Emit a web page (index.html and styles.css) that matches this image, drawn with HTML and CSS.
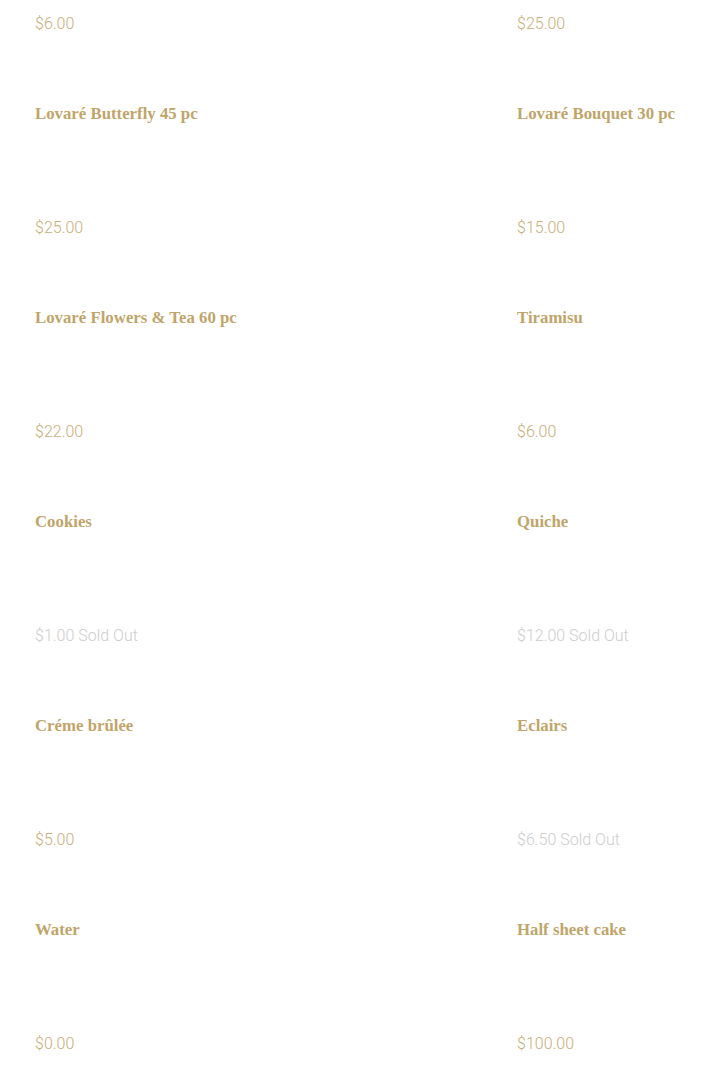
FILE: index.html
```html
<!DOCTYPE html>
<html>
<head>
<meta charset="utf-8">
<link rel="stylesheet" href="styles.css">
</head>
<body>
<div class="menu">
  <div class="item partial"><div class="price">$6.00</div></div>
  <div class="item partial"><div class="price">$25.00</div></div>

  <div class="item"><div class="title">Lovaré Butterfly 45 pc</div><div class="price">$25.00</div></div>
  <div class="item"><div class="title">Lovaré Bouquet 30 pc</div><div class="price">$15.00</div></div>

  <div class="item"><div class="title">Lovaré Flowers &amp; Tea 60 pc</div><div class="price">$22.00</div></div>
  <div class="item"><div class="title">Tiramisu</div><div class="price">$6.00</div></div>

  <div class="item"><div class="title">Cookies</div><div class="price soldout">$1.00 Sold Out</div></div>
  <div class="item"><div class="title">Quiche</div><div class="price soldout">$12.00 Sold Out</div></div>

  <div class="item"><div class="title">Créme brûlée</div><div class="price">$5.00</div></div>
  <div class="item"><div class="title">Eclairs</div><div class="price soldout">$6.50 Sold Out</div></div>

  <div class="item"><div class="title">Water</div><div class="price">$0.00</div></div>
  <div class="item"><div class="title">Half sheet cake</div><div class="price">$100.00</div></div>
</div>
</body>
</html>
```
FILE: styles.css
```css
html, body {
  margin: 0;
  padding: 0;
  background: #ffffff;
}
.menu {
  display: grid;
  grid-template-columns: 482px 1fr;
  padding: 0 0 0 35px;
}
.item {
  display: flex;
  flex-direction: column;
  padding-bottom: 68px;
}
.item.partial {
  padding-top: 14px;
}
.title {
  font-family: "Liberation Serif", "DejaVu Serif", serif;
  font-weight: bold;
  font-size: 16.8px;
  line-height: 24px;
  height: 24px;
  color: #bfa56a;
  margin-bottom: 92px;
  white-space: nowrap;
}
.price {
  font-family: Roboto, "Liberation Sans", sans-serif;
  font-weight: 300;
  font-size: 16px;
  line-height: 20px;
  height: 20px;
  color: #c6ae79;
}
.price.soldout {
  color: #cdcdcd;
}
```
